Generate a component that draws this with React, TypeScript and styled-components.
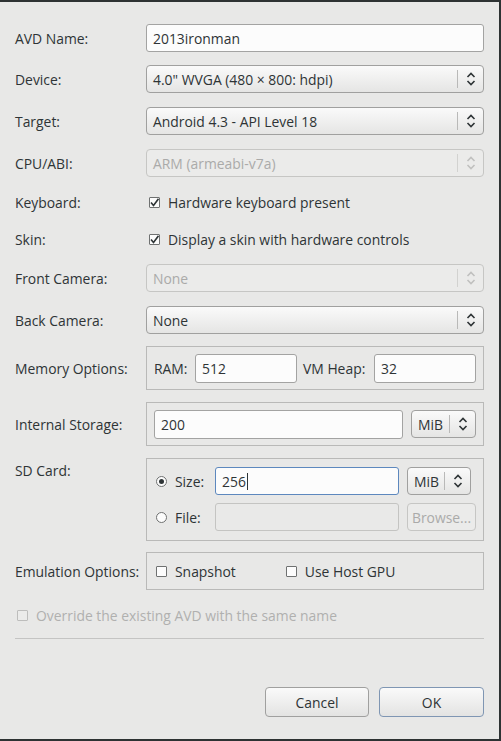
import styled, { createGlobalStyle, css } from "styled-components";

const GlobalStyle = createGlobalStyle`
  html, body {
    margin: 0;
    padding: 0;
    background: #e8e8e7;
  }
  * {
    box-sizing: border-box;
  }
`;

const Window = styled.div`
  width: 501px;
  height: 741px;
  display: flex;
  flex-direction: column;
  padding: 22px 15px 22px 15px;
  background: #e8e8e7;
  border-top: 2px solid #2d3233;
  border-right: 2px solid #2d3233;
  border-bottom: 2px solid #2d3233;
  font-family: "Open Sans", "Noto Sans", sans-serif;
  font-size: 13.9px;
  color: #2e3436;
`;

const FormRow = styled.div<{ $top?: number; $h?: number; $alignTop?: boolean }>`
  display: grid;
  grid-template-columns: 131px 1fr;
  align-items: ${(p) => (p.$alignTop ? "start" : "center")};
  margin-top: ${(p) => p.$top ?? 0}px;
  height: ${(p) => (p.$h ? `${p.$h}px` : "auto")};
`;

const Label = styled.div<{ $padTop?: number }>`
  padding-top: ${(p) => p.$padTop ?? 0}px;
  white-space: nowrap;
`;

const Field = styled.div<{ $width?: number; $focused?: boolean; $disabled?: boolean; $h?: number }>`
  height: ${(p) => p.$h ?? 28}px;
  ${(p) => (p.$width ? `width: ${p.$width}px; flex: none;` : "flex: 1;")}
  min-width: 0;
  display: flex;
  align-items: center;
  padding: 0 6px;
  border: 1px solid #a3a3a2;
  border-radius: 3px;
  background: #fcfcfc;
  white-space: nowrap;
  ${(p) =>
    p.$focused &&
    css`
      border-color: #5d88be;
    `}
  ${(p) =>
    p.$disabled &&
    css`
      border-color: #c4c4c2;
      background: #e9e9e8;
    `}
`;

const Caret = styled.span`
  display: inline-block;
  width: 1px;
  height: 17px;
  background: #2e3436;
  margin-left: 1px;
`;

const Combo = styled.div<{ $width?: number; $disabled?: boolean }>`
  height: 28px;
  ${(p) => (p.$width ? `width: ${p.$width}px; flex: none;` : "flex: 1;")}
  display: flex;
  align-items: center;
  border: 1px solid #a0a09f;
  border-radius: 4px;
  background: linear-gradient(#fafafa, #e5e5e4);
  color: #2e3436;
  ${(p) =>
    p.$disabled &&
    css`
      border-color: #c6c6c4;
      background: #ebebea;
      color: #aaaaa9;
    `}
`;

const ComboValue = styled.div`
  flex: 1;
  padding-left: 6px;
  white-space: nowrap;
  overflow: hidden;
`;

const ComboDivider = styled.div<{ $disabled?: boolean }>`
  width: 1px;
  height: 18px;
  background: ${(p) => (p.$disabled ? "#d2d2d0" : "#b9b9b8")};
`;

const ComboArrow = styled.div`
  width: 25px;
  display: flex;
  justify-content: center;
  align-items: center;
`;

const Frame = styled.div<{ $h: number }>`
  height: ${(p) => p.$h}px;
  border: 1px solid #b9b9b8;
  display: flex;
  align-items: center;
  padding: 0 7px;
`;

const SdFrame = styled.div`
  height: 83px;
  border: 1px solid #b9b9b8;
  display: flex;
  flex-direction: column;
  gap: 8px;
  padding: 8px 0 0 9px;
`;

const SdRow = styled.div`
  display: flex;
  align-items: center;
`;

const InlineLabel = styled.span<{ $ml?: number; $w?: number }>`
  margin-left: ${(p) => p.$ml ?? 0}px;
  ${(p) => p.$w && `width: ${p.$w}px;`}
  flex: none;
  white-space: nowrap;
`;

const CheckRow = styled.label<{ $ml?: number; $muted?: boolean }>`
  display: flex;
  align-items: center;
  gap: 8px;
  margin-left: ${(p) => p.$ml ?? 0}px;
  white-space: nowrap;
  color: ${(p) => (p.$muted ? "#b0b0af" : "inherit")};
`;

const Box = styled.span<{ $muted?: boolean }>`
  width: 11px;
  height: 11px;
  flex: none;
  border: 1px solid ${(p) => (p.$muted ? "#bdbdbc" : "#6f7171")};
  border-radius: 1px;
  background: ${(p) => (p.$muted ? "#ebebea" : "#fcfcfc")};
  display: flex;
  align-items: center;
  justify-content: center;
`;

const RadioDot = styled.span<{ $on?: boolean }>`
  width: 11px;
  height: 11px;
  flex: none;
  border: 1px solid #6f7171;
  border-radius: 50%;
  background: #fcfcfc;
  display: flex;
  align-items: center;
  justify-content: center;
  &::after {
    content: "";
    display: ${(p) => (p.$on ? "block" : "none")};
    width: 5px;
    height: 5px;
    border-radius: 50%;
    background: #2e3436;
  }
`;

const Separator = styled.div`
  margin-top: 12px;
  height: 1px;
  background: #c4c4c3;
`;

const ButtonBar = styled.div`
  margin-top: auto;
  display: flex;
  justify-content: flex-end;
  gap: 10px;
`;

const Button = styled.div<{ $width: number; $default?: boolean; $disabled?: boolean; $h?: number }>`
  width: ${(p) => p.$width}px;
  height: ${(p) => p.$h ?? 30}px;
  flex: none;
  display: flex;
  align-items: center;
  justify-content: center;
  border: 1px solid ${(p) => (p.$default ? "#7f96b3" : "#a0a09f")};
  border-radius: 4px;
  background: linear-gradient(#fafafa, #e3e3e2);
  color: #2e3436;
  ${(p) =>
    p.$disabled &&
    css`
      border-color: #c6c6c4;
      background: #ebebea;
      color: #aaaaa9;
    `}
`;

const Arrows = ({ muted }: { muted?: boolean }) => (
  <svg width="10" height="16" viewBox="0 0 10 16">
    <path
      d="M1.5 6 L5 2.5 L8.5 6 M1.5 10 L5 13.5 L8.5 10"
      fill="none"
      stroke={muted ? "#c0c0bf" : "#2e3436"}
      strokeWidth="1.6"
    />
  </svg>
);

const Tick = () => (
  <svg width="9" height="9" viewBox="0 0 9 9">
    <path d="M1 4.5 L3.5 7.5 L8.5 0.8" fill="none" stroke="#2e3436" strokeWidth="1.6" />
  </svg>
);

const Select = ({
  value,
  disabled,
  width,
}: {
  value: string;
  disabled?: boolean;
  width?: number;
}) => (
  <Combo $disabled={disabled} $width={width}>
    <ComboValue>{value}</ComboValue>
    <ComboDivider $disabled={disabled} />
    <ComboArrow>
      <Arrows muted={disabled} />
    </ComboArrow>
  </Combo>
);

const Check = ({
  label,
  checked,
  muted,
  ml,
}: {
  label: string;
  checked?: boolean;
  muted?: boolean;
  ml?: number;
}) => (
  <CheckRow $ml={ml} $muted={muted}>
    <Box $muted={muted}>{checked && <Tick />}</Box>
    {label}
  </CheckRow>
);

export default function App() {
  return (
    <>
      <GlobalStyle />
      <Window>
        <FormRow>
          <Label>AVD Name:</Label>
          <Field>2013ironman</Field>
        </FormRow>
        <FormRow $top={13}>
          <Label>Device:</Label>
          <Select value={"4.0\" WVGA (480 × 800: hdpi)"} />
        </FormRow>
        <FormRow $top={14}>
          <Label>Target:</Label>
          <Select value="Android 4.3 - API Level 18" />
        </FormRow>
        <FormRow $top={14}>
          <Label>CPU/ABI:</Label>
          <Select value="ARM (armeabi-v7a)" disabled />
        </FormRow>
        <FormRow $top={14} $h={22}>
          <Label>Keyboard:</Label>
          <Check label="Hardware keyboard present" checked ml={3} />
        </FormRow>
        <FormRow $top={15} $h={22}>
          <Label>Skin:</Label>
          <Check label="Display a skin with hardware controls" checked ml={3} />
        </FormRow>
        <FormRow $top={14}>
          <Label>Front Camera:</Label>
          <Select value="None" disabled />
        </FormRow>
        <FormRow $top={14}>
          <Label>Back Camera:</Label>
          <Select value="None" />
        </FormRow>
        <FormRow $top={12}>
          <Label>Memory Options:</Label>
          <Frame $h={44}>
            <InlineLabel $w={41}>RAM:</InlineLabel>
            <Field $h={29} $width={102}>512</Field>
            <InlineLabel $ml={6} $w={71}>
              VM Heap:
            </InlineLabel>
            <Field $h={29} $width={102}>32</Field>
          </Frame>
        </FormRow>
        <FormRow $top={12}>
          <Label>Internal Storage:</Label>
          <Frame $h={44}>
            <Field $h={29}>200</Field>
            <InlineLabel $ml={8} />
            <Select value="MiB" width={65} />
          </Frame>
        </FormRow>
        <FormRow $top={12} $alignTop>
          <Label $padTop={3}>SD Card:</Label>
          <SdFrame>
            <SdRow>
              <RadioDot $on />
              <InlineLabel $ml={8} $w={40}>
                Size:
              </InlineLabel>
              <Field $width={184} $focused>
                256
                <Caret />
              </Field>
              <InlineLabel $ml={8} />
              <Select value="MiB" width={64} />
            </SdRow>
            <SdRow>
              <RadioDot />
              <InlineLabel $ml={8} $w={40}>
                File:
              </InlineLabel>
              <Field $width={184} $disabled />
              <InlineLabel $ml={8} />
              <Button $width={69} $h={28} $disabled>
                Browse...
              </Button>
            </SdRow>
          </SdFrame>
        </FormRow>
        <FormRow $top={11}>
          <Label>Emulation Options:</Label>
          <Frame $h={38}>
            <Check label="Snapshot" ml={2} />
            <Check label="Use Host GPU" ml={50} />
          </Frame>
        </FormRow>
        <FormRow $top={14} $h={22}>
          <Check label="Override the existing AVD with the same name" muted ml={2} />
        </FormRow>
        <Separator />
        <ButtonBar>
          <Button $width={104}>Cancel</Button>
          <Button $width={105} $default>
            OK
          </Button>
        </ButtonBar>
      </Window>
    </>
  );
}
